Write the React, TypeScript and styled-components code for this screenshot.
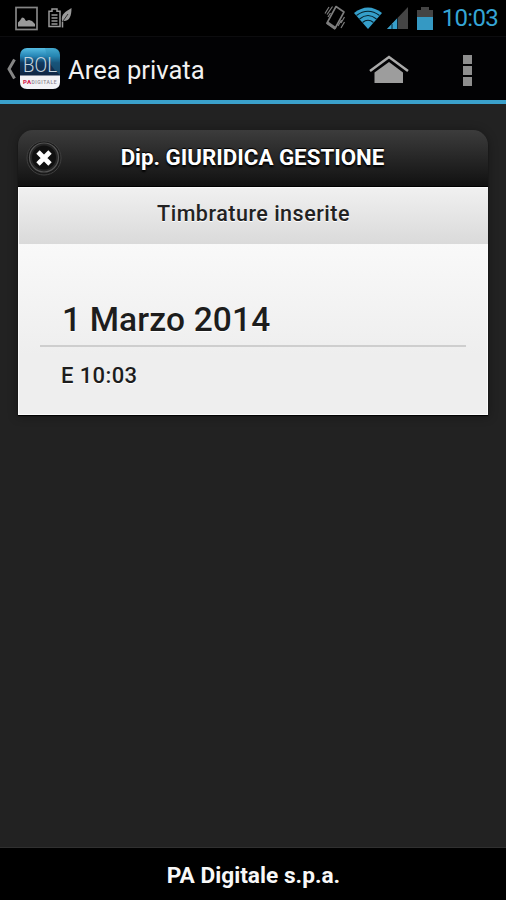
import React from "react";
import styled, { createGlobalStyle } from "styled-components";

const GlobalStyle = createGlobalStyle`
  * { box-sizing: border-box; }
  body { margin: 0; background: #222; font-family: Roboto, "Liberation Sans", sans-serif; }
`;

const Screen = styled.div`
  width: 506px;
  height: 900px;
  display: flex;
  flex-direction: column;
  background: #222;
  overflow: hidden;
`;

const StatusBar = styled.header`
  height: 37px;
  flex: none;
  display: flex;
  align-items: center;
  justify-content: space-between;
  padding: 0 8px 0 14px;
  background: #000;
  border-bottom: 1px solid #0c0c0e;
`;

const StatusGroup = styled.div<{ $gap: number }>`
  display: flex;
  align-items: center;
  gap: ${(p) => p.$gap}px;
`;

const Clock = styled.span`
  font-size: 24px;
  line-height: 36px;
  letter-spacing: -0.7px;
  color: #35a5d5;
`;

const ActionBar = styled.nav`
  height: 67px;
  flex: none;
  display: flex;
  align-items: center;
  padding-left: 6px;
  background: #020204;
  border-bottom: 4px solid #3aa0cb;
`;

const BackMark = styled.svg`
  margin-right: 3px;
`;

const Title = styled.h1`
  flex: 1;
  margin: 3px 0 0 8px;
  color: #f1f1f1;
  font-size: 25.6px;
  font-weight: 400;
  line-height: 30px;
`;

const HomeIcon = styled.svg`
  margin: 2px 54px 0 0;
`;

const Overflow = styled.div`
  display: flex;
  flex-direction: column;
  gap: 2px;
  margin: 3px 34px 0 0;
`;

const OverflowDot = styled.i`
  width: 9px;
  height: 9px;
  background: #8e8e8e;
`;

const Content = styled.main`
  flex: 1;
  padding: 26px 18px 0;
`;

const Card = styled.section`
  height: 285px;
  display: flex;
  flex-direction: column;
  border-radius: 16px 16px 0 0;
  box-shadow: 0 1px 1px 0 #000, 0 1px 10px 1px rgba(0, 0, 0, 0.3);
`;

const CardHeader = styled.header`
  height: 57px;
  flex: none;
  display: grid;
  grid-template-columns: 52px 1fr 52px;
  align-items: center;
  justify-items: center;
  border-radius: 15px 15px 0 0;
  border-bottom: 1px solid #000;
  background: linear-gradient(#3c3c3c, #111);
`;

const CloseButton = styled.button`
  width: 36px;
  height: 38px;
  padding: 0;
  border: 0;
  background: none;
  display: flex;
`;

const CardTitle = styled.h2`
  margin: -2px 0 0 -1px;
  color: #fff;
  font-size: 22.3px;
  line-height: 28px;
  font-weight: 700;
  white-space: nowrap;
  text-shadow: 0 -1px 1px #000, 0 2px 2px #000;
`;

const Subtitle = styled.div`
  height: 57px;
  flex: none;
  padding-top: 12px;
  text-align: center;
  border-left: 1px solid #fafafa;
  border-top: 1px solid #fafafa;
  background: linear-gradient(#f0f0f0, #dadada);
  color: #222;
  font-size: 21.5px;
  line-height: 28px;
  font-weight: 500;
  letter-spacing: 0.5px;
  text-shadow: 0 1px 0 #fff;
`;

const Entries = styled.div`
  flex: 1;
  padding: 56px 21px 0 21px;
  border: solid #fbfbfb;
  border-width: 0 1px 1px;
  background: linear-gradient(#f9f9f9, #eee 65%);
  color: #1d1d1d;
  font-weight: 500;
  text-shadow: 0 1px 0 #fff;
`;

const Day = styled.h3`
  height: 47px;
  margin: 0;
  padding-left: 22px;
  font-size: 33.5px;
  line-height: 40px;
  font-weight: 500;
  letter-spacing: 0.15px;
  border-bottom: 2px solid #cecece;
`;

const Stamp = styled.div`
  padding: 15px 0 0 21px;
  font-size: 22px;
  line-height: 28px;
  letter-spacing: 0.4px;
`;

const Footer = styled.footer`
  height: 53px;
  flex: none;
  border-top: 1px solid #303030;
  background: #000;
  color: #f8f8f8;
  text-align: center;
  font-size: 22.7px;
  font-weight: 700;
  line-height: 55px;
  padding-left: 1px;
`;

function GalleryIcon() {
  return (
    <svg width="24" height="25" viewBox="0 0 24 25">
      <rect x="2" y="1.500" width="21" height="22" fill="none" stroke="#858585" strokeWidth="1.7" />
      <path d="M4 20.500v-4l2-2 2-3 2 .5 2 3 3-1 3 1 3 3v2.500z" fill="#999" />
    </svg>
  );
}

function BatterySaverIcon() {
  return (
    <svg width="25" height="22" viewBox="0 0 25 22" fill="none" stroke="#999" strokeWidth="1.500">
      <path d="M2 4.200h3V2h5v2.200h3V19.500H2zM4.500 8h6M4.500 11h6M4.500 14h6M4.500 17h6" />
      <path d="M15 14C14 7 18 5 24.500 1c0 8-2 14-9 13z" fill="#999" stroke="none" />
      <path d="M16 14l5-7" stroke="#333" strokeWidth="1" />
      <path d="M15.500 20.500v-6" />
    </svg>
  );
}

function VibrateIcon() {
  return (
    <svg width="22" height="26" viewBox="0 0 22 26" fill="none" stroke="#7d7d7d">
      <path d="M12 1.500L20 7 11 23.500 3 18z" strokeWidth="1.600" strokeLinejoin="round" />
      <path d="M3 17.500l8.500 6" strokeWidth="3" />
      <path d="M5 2L1 8.500M8.500 1.500L3 9.500M6.500 8L4 12M20.500 12l-3.500 6M17.500 15l-3.500 6M20.500 17l-3.500 6" strokeWidth="1.200" />
    </svg>
  );
}

function WifiIcon() {
  return (
    <svg width="28" height="22" viewBox="0 0 28 22">
      <path d="M0 6Q14-5 28 6L14 22z" fill="#359fcb" />
      <g fill="none" stroke="#06212d" strokeWidth="1.100">
        <path d="M2.500 8.500Q14 0 25.500 8.500M5.500 12Q14 5 22.500 12M8.500 15.500Q14 11 19.500 15.500" />
      </g>
    </svg>
  );
}

function SignalIcon() {
  return (
    <svg width="21" height="22" viewBox="0 0 21 22">
      <path d="M0 22L21 0v22z" fill="#454545" />
      <path d="M0 22L10 11.500V22z" fill="#369fcb" />
      <path d="M5 17v5M10.500 11v11" stroke="#092838" strokeWidth="1" />
    </svg>
  );
}

function BatteryIcon() {
  return (
    <svg width="16" height="23" viewBox="0 0 16 23">
      <path d="M0 3h4V0h8v3h4v8H0z" fill="#444" />
      <path d="M0 10h16v13H0z" fill="#3599c3" />
    </svg>
  );
}

function AppLogo() {
  return (
    <svg width="40" height="41" viewBox="0 0 40 41">
      <defs>
        <linearGradient id="sky" x1="0" y1="0" x2="0" y2="1">
          <stop offset="0" stopColor="#55bce2" />
          <stop offset=".2" stopColor="#2685b5" />
          <stop offset=".36" stopColor="#10395f" />
          <stop offset=".7" stopColor="#102340" />
        </linearGradient>
      </defs>
      <rect width="40" height="41" rx="7" fill="url(#sky)" />
      <path d="M25 0h8q7 0 7 7v20q-12-9-15-27z" fill="#2587ad" opacity=".35" />
      <path d="M0 27.500h40V34q0 7-7 7H7q-7 0-7-7z" fill="#f2f2f6" />
      <text x="3" y="23.500" fontSize="21" fontWeight="300" textLength="34" lengthAdjust="spacingAndGlyphs" fill="#c5d4df">BOL</text>
      <text x="3" y="36" fontSize="6" fontWeight="900" textLength="8" fill="#d51c4d">PA</text>
      <text x="11.500" y="35.500" fontSize="5" fontWeight="500" textLength="25" fill="#8c8790">DIGITALE</text>
    </svg>
  );
}

export default function App() {
  return (
    <>
      <GlobalStyle />
      <Screen>
        <StatusBar>
          <StatusGroup $gap={9}>
            <GalleryIcon />
            <BatterySaverIcon />
          </StatusGroup>
          <StatusGroup $gap={5}>
            <StatusGroup $gap={8}>
              <VibrateIcon />
              <WifiIcon />
            </StatusGroup>
            <StatusGroup $gap={9}>
              <SignalIcon />
              <BatteryIcon />
              <Clock>10:03</Clock>
            </StatusGroup>
          </StatusGroup>
        </StatusBar>
        <ActionBar>
          <BackMark width="11" height="22" viewBox="0 0 11 22">
            <path d="M8.500 1.500L3 11l5.500 9.500" fill="none" stroke="#858585" strokeWidth="3" />
          </BackMark>
          <AppLogo />
          <Title>Area privata</Title>
          <HomeIcon width="40" height="29" viewBox="0 0 40 29">
            <path d="M1 16L20 2l19 14" fill="none" stroke="#aaa" strokeWidth="2.500" />
            <path d="M5.500 28V17.500L20 7l14 10.500V28z" fill="#9d9d9d" />
          </HomeIcon>
          <Overflow>
            <OverflowDot />
            <OverflowDot />
            <OverflowDot />
          </Overflow>
        </ActionBar>
        <Content>
          <Card>
            <CardHeader>
              <CloseButton aria-label="Chiudi">
                <svg width="36" height="38" viewBox="0 0 36 38">
                  <circle cx="18" cy="19" r="17" fill="#191919" stroke="#404040" />
                  <circle cx="18" cy="18.500" r="14.500" fill="#252525" stroke="#555" strokeWidth="1.200" />
                  <circle cx="18" cy="18.500" r="12" fill="#101010" />
                  <path d="M12 13l12 12M24 13L12 25" stroke="#fff" strokeWidth="4.800" />
                </svg>
              </CloseButton>
              <CardTitle>Dip. GIURIDICA GESTIONE</CardTitle>
            </CardHeader>
            <Subtitle>Timbrature inserite</Subtitle>
            <Entries>
              <Day>1 Marzo 2014</Day>
              <Stamp>E 10:03</Stamp>
            </Entries>
          </Card>
        </Content>
        <Footer>PA Digitale s.p.a.</Footer>
      </Screen>
    </>
  );
}
